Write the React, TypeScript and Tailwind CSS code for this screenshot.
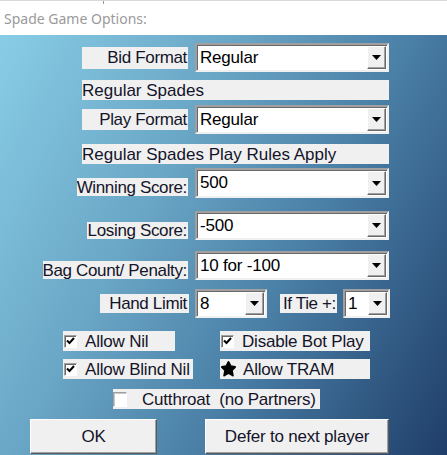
import React from 'react';

const font = { fontFamily: '"Liberation Sans", Arial, sans-serif' };

const Arrow = () => (
  <div className="flex h-full w-[19px] shrink-0 items-center justify-center border border-t-white border-l-white border-r-[#696969] border-b-[#696969] bg-[#f0f0f0] shadow-[inset_-1px_-1px_0_#a0a0a0]">
    <svg width="9" height="5" viewBox="0 0 9 5">
      <polygon points="0,0 9,0 4.5,5" fill="#000" />
    </svg>
  </div>
);

const Select = ({ value, w, h = 'h-[29px]', top = false }: { value: string; w: string; h?: string; top?: boolean }) => (
  <div className={`${w} ${h} flex shrink-0 border-2 border-t-[#a0a0a0] border-l-[#a0a0a0] border-r-[#f0f0f0] border-b-[#f0f0f0] bg-white shadow-[inset_1px_1px_0_#696969]`}>
    <div className={`flex-1 pl-[3px] text-[17px] leading-none tracking-[-0.2px] text-black ${top ? 'pt-[4px]' : 'flex items-center'}`}>{value}</div>
    <div className="p-[1px]">
      <Arrow />
    </div>
  </div>
);

const Label = ({ text, w, cls = '' }: { text: string; w: string; cls?: string }) => (
  <div className={`${w} ${cls} flex shrink-0 items-center justify-end whitespace-nowrap bg-[#f0f0f0] pr-[1px] text-[17px] leading-none tracking-[-0.35px] text-[#14142a]`}>
    {text}
  </div>
);

const Check = ({ checked }: { checked: boolean }) => (
  <div className="flex h-[13px] w-[13px] shrink-0 items-center justify-center border border-t-[#a0a0a0] border-l-[#a0a0a0] border-r-white border-b-white bg-white shadow-[inset_1px_1px_0_#696969]">
    {checked && (
      <svg width="9" height="8" viewBox="0 0 9 8">
        <polyline points="1,3.5 3.5,6 8,1" fill="none" stroke="#000" strokeWidth="2" />
      </svg>
    )}
  </div>
);

const CheckRow = ({ text, checked, w }: { text: string; checked: boolean; w: string }) => (
  <div className={`${w} flex h-[20px] items-center whitespace-nowrap bg-[#f0f0f0] pl-[1px] text-[17px] leading-none tracking-[-0.2px] text-[#14142a]`}>
    <Check checked={checked} />
    <span className="ml-[8px]">{text}</span>
  </div>
);

export default function App() {
  return (
    <div className="h-[455px] w-[447px] overflow-hidden bg-white" style={font}>
      <div className="relative h-[35px] border-t border-[#d9d9d9] bg-white">
        <div className="absolute left-[103px] top-0 h-[3px] w-[1px] bg-[#9a9a9a]" />
        <div className="pl-[4px] pt-[7px] text-[14px] text-[#9a9a9a]" style={{ fontFamily: '"Noto Sans", "Open Sans", sans-serif' }}>
          Spade Game Options:
        </div>
      </div>
      <div className="flex h-[420px] flex-col bg-[linear-gradient(118deg,#88cde5_0%,#6aa6c6_35%,#4a7fa6_62%,#1f3e69_100%)]">
        <div className="ml-[82px] mt-[8px] flex items-center">
          <Label text="Bid Format" w="w-[106px]" cls="h-[22px]" />
          <div className="ml-[7px]"><Select value="Regular" w="w-[194px]" /></div>
        </div>
        <div className="ml-[82px] mt-[8px] flex h-[20px] w-[307px] items-center bg-[#f0f0f0] text-[17px] leading-none text-[#14142a]">
          Regular Spades
        </div>
        <div className="ml-[82px] mt-[5px] flex items-center">
          <Label text="Play Format" w="w-[106px]" cls="h-[21px]" />
          <div className="ml-[7px]"><Select value="Regular" w="w-[194px]" /></div>
        </div>
        <div className="ml-[82px] mt-[10px] flex h-[20px] w-[307px] items-center bg-[#f0f0f0] text-[17px] leading-none text-[#14142a]">
          Regular Spades Play Rules Apply
        </div>
        <div className="ml-[77px] mt-[4px] flex items-end">
          <Label text="Winning Score:" w="w-[111px]" cls="mb-[2px] h-[18px]" />
          <div className="ml-[7px]"><Select value="500" w="w-[194px]" h="h-[30px]" top /></div>
        </div>
        <div className="ml-[87px] mt-[13px] flex items-end">
          <Label text="Losing Score:" w="w-[101px]" cls="mb-[1px] h-[17px]" />
          <div className="ml-[7px]"><Select value="-500" w="w-[194px]" top /></div>
        </div>
        <div className="ml-[43px] mt-[11px] flex items-end">
          <Label text="Bag Count/ Penalty:" w="w-[145px]" cls="mb-[1px] h-[18px]" />
          <div className="ml-[7px]"><Select value="10 for -100" w="w-[194px]" top /></div>
        </div>
        <div className="ml-[100px] mt-[9px] flex items-center">
          <Label text="Hand Limit" w="w-[89px]" cls="h-[19px] pr-[2px]" />
          <div className="ml-[6px]"><Select value="8" w="w-[72px]" h="h-[29px]" top /></div>
          <Label text="If Tie +:" w="w-[57px]" cls="ml-[13px] h-[19px]" />
          <div className="ml-[6px]"><Select value="1" w="w-[47px]" h="h-[29px]" top /></div>
        </div>
        <div className="ml-[63px] mt-[13px] flex">
          <CheckRow text="Allow Nil" checked w="w-[112px]" />
          <div className="ml-[45px]"><CheckRow text="Disable Bot Play" checked w="w-[150px]" /></div>
        </div>
        <div className="ml-[63px] mt-[8px] flex">
          <CheckRow text="Allow Blind Nil" checked w="w-[130px]" />
          <div className="ml-[27px] flex h-[20px] w-[150px] items-center whitespace-nowrap bg-[#f0f0f0] pl-[1px] text-[17px] leading-none tracking-[-0.2px] text-[#14142a]">
            <svg width="15" height="16" viewBox="0 0 16 17">
              <polygon points="8,1 10.3,5.6 15,6.4 11.6,9.9 12.6,15.5 8,12.8 3.4,15.5 4.4,9.9 1,6.4 5.7,5.6" fill="#000" stroke="#000" strokeWidth="2" strokeLinejoin="round" />
            </svg>
            <span className="ml-[7px]">Allow TRAM</span>
          </div>
        </div>
        <div className="ml-[113px] mt-[10px] flex h-[20px] w-[207px] items-center whitespace-nowrap bg-[#f0f0f0] text-[17px] leading-none tracking-[-0.2px] text-[#14142a]">
          <div className="flex h-[15px] w-[14px] border border-t-[#a0a0a0] border-l-[#a0a0a0] border-r-white border-b-white bg-white shadow-[inset_1px_1px_0_#c8c8c8]" />
          <span className="ml-[15px] whitespace-pre">Cutthroat  (no Partners)</span>
        </div>
        <div className="ml-[30px] mt-[10px] flex">
          <button className="flex h-[35px] w-[127px] items-center justify-center border border-t-white border-l-white border-r-[#5a5a5a] border-b-[#5a5a5a] bg-[#f0f0f0] text-[17px] tracking-[-0.2px] text-[#14142a] shadow-[inset_-1px_-1px_0_#a0a0a0]">
            OK
          </button>
          <button className="ml-[48px] flex h-[35px] w-[184px] items-center justify-center border border-t-white border-l-white border-r-[#5a5a5a] border-b-[#5a5a5a] bg-[#f0f0f0] text-[17px] tracking-[-0.2px] text-[#14142a] shadow-[inset_-1px_-1px_0_#a0a0a0]">
            Defer to next player
          </button>
        </div>
      </div>
    </div>
  );
}
